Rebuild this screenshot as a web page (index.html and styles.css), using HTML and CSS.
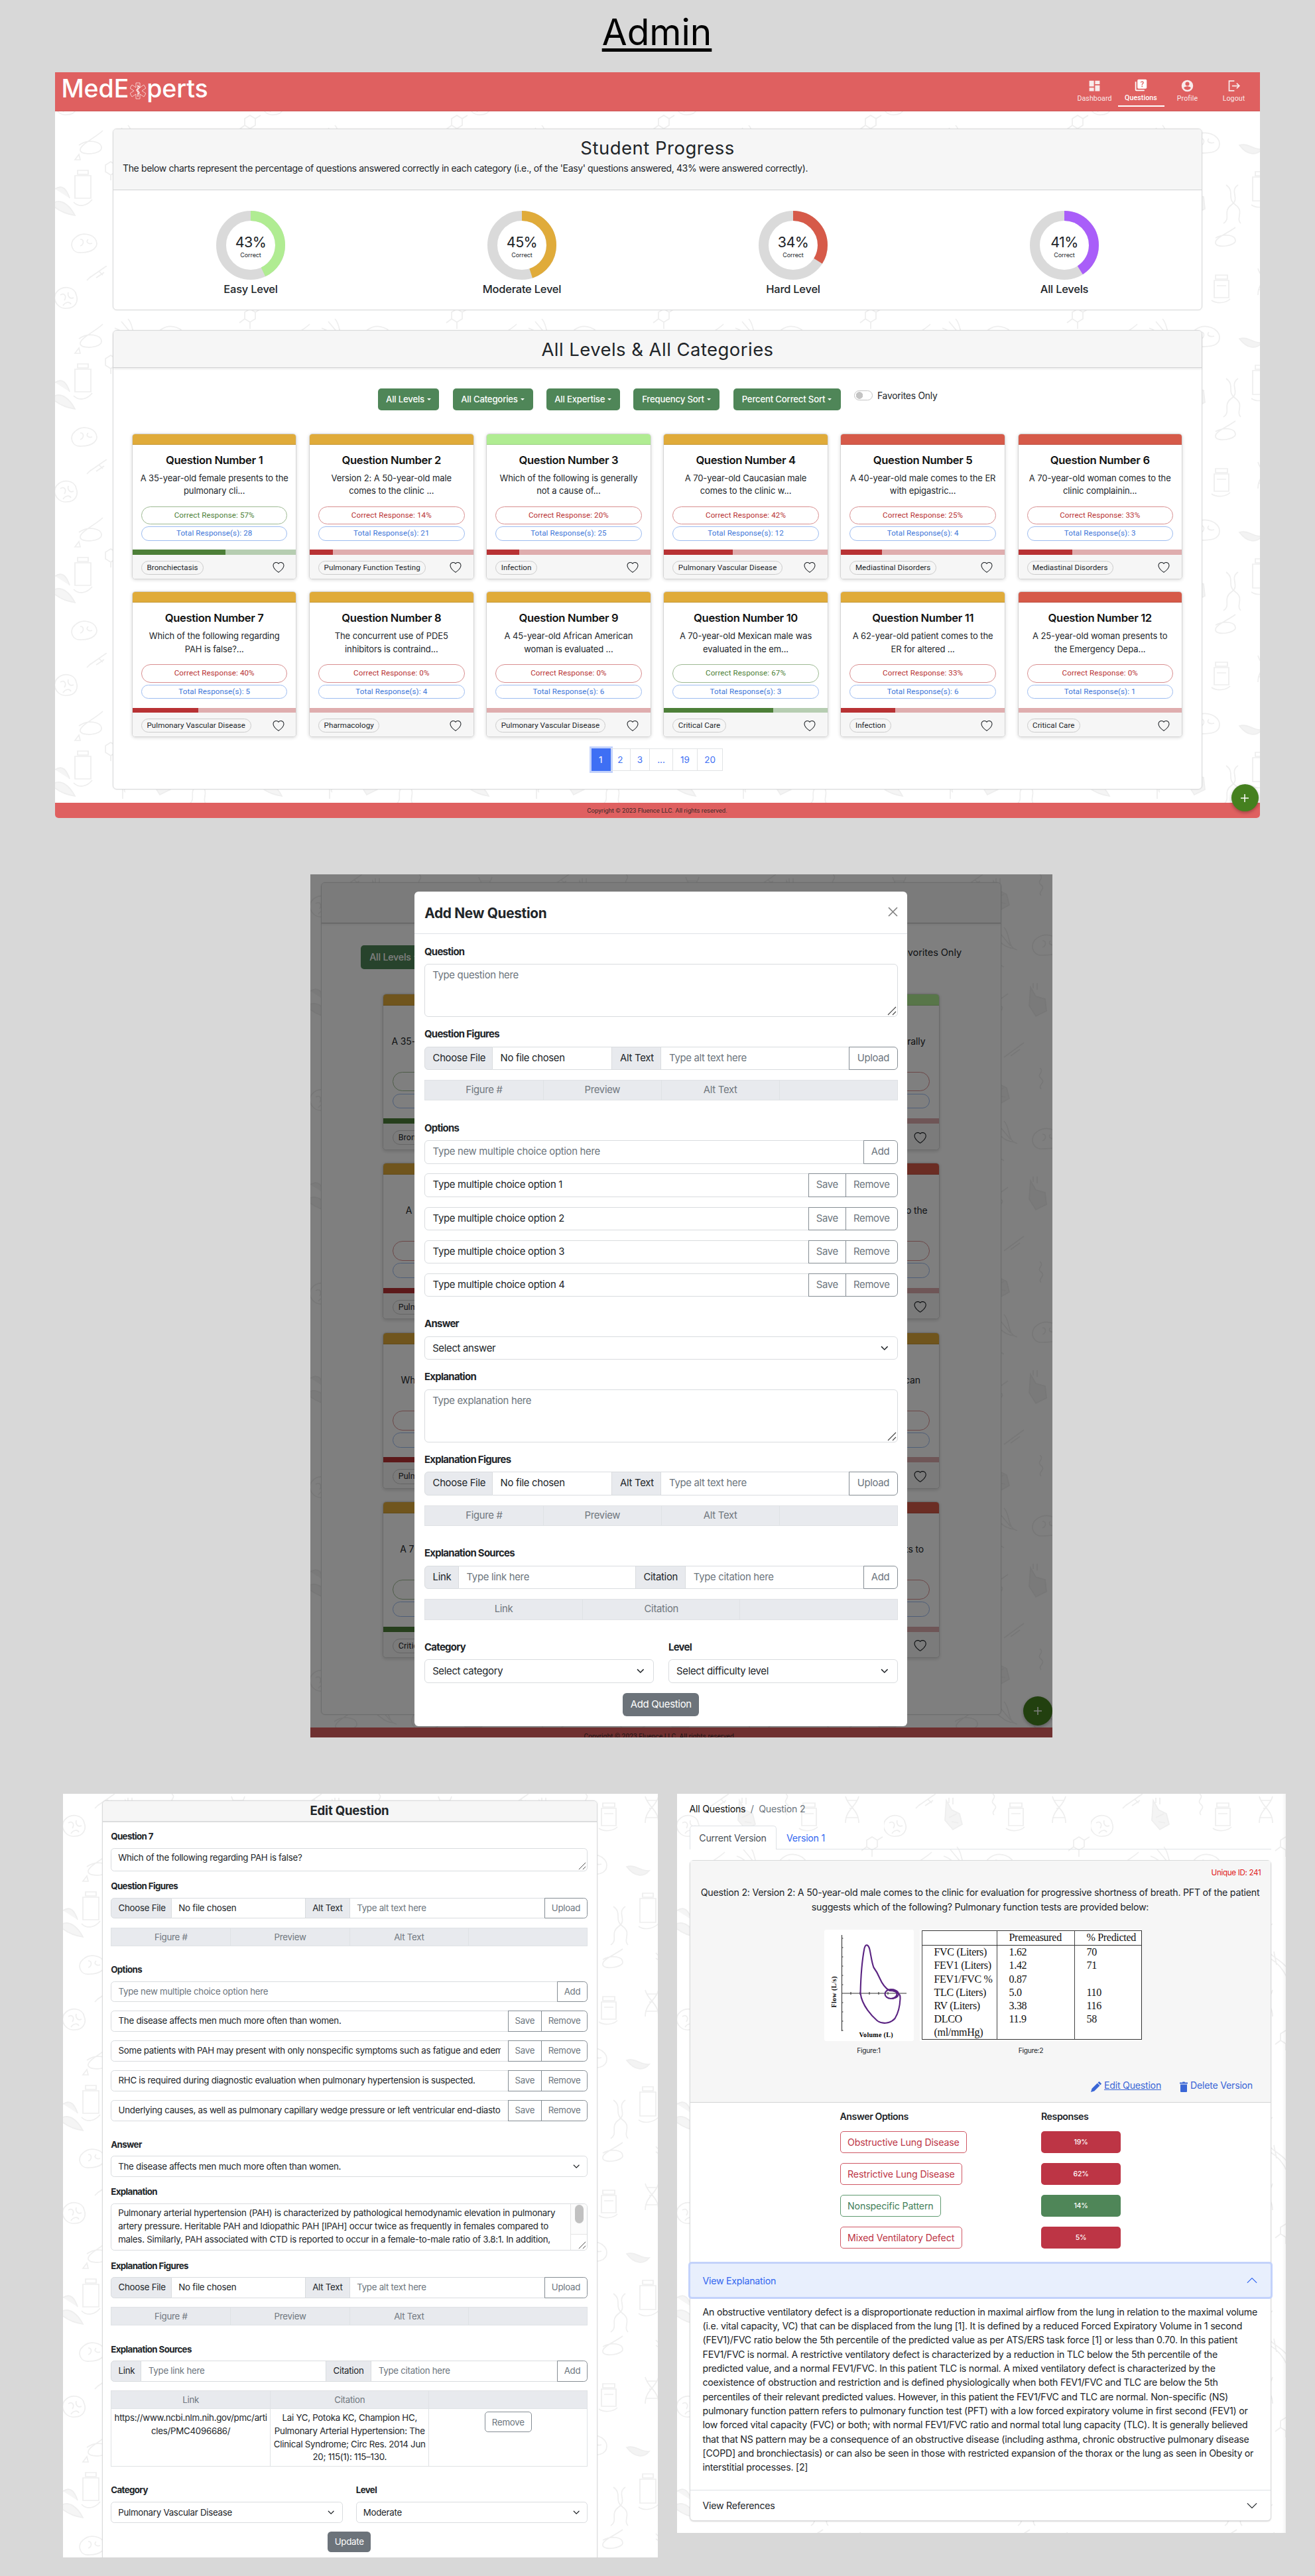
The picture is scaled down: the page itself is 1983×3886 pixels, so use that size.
FILE: index.html
```html
<!DOCTYPE html>
<html lang="en">
<head>
<meta charset="utf-8">
<title>MedExperts Admin</title>
<link rel="stylesheet" href="styles.css">
</head>
<body>
<svg class="sprite" width="0" height="0" aria-hidden="true">
  <symbol id="heart" viewBox="0 0 16 16"><path fill="currentColor" d="m8 2.748-.717-.737C5.6.281 2.514.878 1.4 3.053c-.523 1.023-.641 2.5.314 4.385.92 1.815 2.834 3.989 6.286 6.357 3.452-2.368 5.365-4.542 6.286-6.357.955-1.886.838-3.362.314-4.385C13.486.878 10.4.28 8.717 2.01L8 2.748zM8 15C-7.333 4.868 3.279-3.04 7.824 1.143c.06.055.119.112.176.171a3.12 3.12 0 0 1 .176-.17C12.72-3.042 23.333 4.867 8 15z"/></symbol>
  <symbol id="chev" viewBox="0 0 16 16"><path fill="none" stroke="currentColor" stroke-width="2" stroke-linecap="round" stroke-linejoin="round" d="m2 5 6 6 6-6"/></symbol>
  <symbol id="chevthin" viewBox="0 0 16 16"><path fill="none" stroke="currentColor" stroke-width="1.1" stroke-linecap="round" stroke-linejoin="round" d="m2 5 6 6 6-6"/></symbol>
  <symbol id="grip" viewBox="0 0 14 14"><path stroke="#444" stroke-width="1.1" d="M1 13 13 1M8 13l5-5"/></symbol>
</svg>

<h1 class="page-title">Admin</h1>

<section class="panel dash">
  <header class="nav">
    <div class="logo"><span>MedE</span><svg class="star" viewBox="0 0 24 26"><path fill="none" stroke="#fff" stroke-opacity=".75" stroke-width=".9" d="M9 1h6v7l6-4 3 5-6 4 6 4-3 5-6-4v7H9v-7l-6 4-3-5 6-4-6-4 3-5 6 4z"/><path fill="none" stroke="#fff" stroke-width="1.1" d="M12 4v18M12 6c4 1 3 3 0 4s-3 3 0 4 3 3 0 4"/></svg><span>perts</span></div>
    <nav class="tabs">
      <a class="tab"><svg viewBox="0 0 24 24"><path fill="currentColor" d="M3 13h8V3H3zm0 8h8v-6H3zm10 0h8V11h-8zm0-18v6h8V3z"/></svg>Dashboard</a>
      <a class="tab on"><svg viewBox="0 0 24 24"><path fill="currentColor" d="M4 6H2v14a2 2 0 0 0 2 2h14v-2H4zm16-4H8a2 2 0 0 0-2 2v12a2 2 0 0 0 2 2h12a2 2 0 0 0 2-2V4a2 2 0 0 0-2-2m-5.990 13a1.050 1.050 0 1 1 0-2.100 1.050 1.050 0 0 1 0 2.100m2.500-6.170c-.63.930-1.230 1.210-1.560 1.810-.13.240-.18.400-.18 1.180h-1.520c0-.410-.06-1.080.26-1.650.410-.730 1.180-1.160 1.630-1.800.480-.680.210-1.940-1.140-1.940-.880 0-1.320.670-1.500 1.230l-1.370-.570C11.510 5.960 12.520 5 13.990 5c1.230 0 2.080.560 2.510 1.260.370.600.580 1.730.010 2.570"/></svg>Questions</a>
      <a class="tab"><svg viewBox="0 0 24 24"><path fill="currentColor" d="M12 2a10 10 0 1 0 0 20 10 10 0 0 0 0-20m0 3a3.500 3.500 0 1 1 0 7 3.500 3.500 0 0 1 0-7m0 14.200a7.200 7.200 0 0 1-6-3.220c.030-1.990 4-3.080 6-3.080s5.970 1.090 6 3.080a7.200 7.200 0 0 1-6 3.220"/></svg>Profile</a>
      <a class="tab"><svg viewBox="0 0 24 24"><path fill="none" stroke="currentColor" stroke-width="2" d="M13 3.500H4v17h9M9 12h12M17 7.500l4.500 4.500-4.500 4.500"/></svg>Logout</a>
    </nav>
  </header>

  <div class="card progress-card">
    <div class="card-head">
      <h2>Student Progress</h2>
      <p>The below charts represent the percentage of questions answered correctly in each category (i.e., of the 'Easy' questions answered, 43% were answered correctly).</p>
    </div>
    <div class="donuts">
      <div class="donut"><svg viewBox="0 0 104 104"><circle cx="52" cy="52" r="44.500" class="ring"/><circle cx="52" cy="52" r="44.500" class="arc easy" pathLength="100" stroke-dasharray="43 100"/><text x="52" y="55" class="pct">43%</text><text x="52" y="69.500" class="cap">Correct</text></svg><b>Easy Level</b></div>
      <div class="donut"><svg viewBox="0 0 104 104"><circle cx="52" cy="52" r="44.500" class="ring"/><circle cx="52" cy="52" r="44.500" class="arc mod" pathLength="100" stroke-dasharray="45 100"/><text x="52" y="55" class="pct">45%</text><text x="52" y="69.500" class="cap">Correct</text></svg><b>Moderate Level</b></div>
      <div class="donut"><svg viewBox="0 0 104 104"><circle cx="52" cy="52" r="44.500" class="ring"/><circle cx="52" cy="52" r="44.500" class="arc hard" pathLength="100" stroke-dasharray="34 100"/><text x="52" y="55" class="pct">34%</text><text x="52" y="69.500" class="cap">Correct</text></svg><b>Hard Level</b></div>
      <div class="donut"><svg viewBox="0 0 104 104"><circle cx="52" cy="52" r="44.500" class="ring"/><circle cx="52" cy="52" r="44.500" class="arc all" pathLength="100" stroke-dasharray="41 100"/><text x="52" y="55" class="pct">41%</text><text x="52" y="69.500" class="cap">Correct</text></svg><b>All Levels</b></div>
    </div>
  </div>

  <div class="card list-card">
    <div class="card-head slim"><h2 class="wide">All Levels &amp; All Categories</h2></div>
    <div class="filters">
      <span class="dd w1">All Levels<i></i></span><span class="dd w2">All Categories<i></i></span><span class="dd w3">All Expertise<i></i></span><span class="dd w4">Frequency Sort<i></i></span><span class="dd w5">Percent Correct Sort<i></i></span>
      <span class="fav"><span class="toggle"></span>Favorites Only</span>
    </div>
    <div class="grid">
      <article class="q mod good"><h3>Question Number 1</h3><p>A 35-year-old female presents to the<br>pulmonary cli...</p><div class="pill">Correct Response: 57%</div><div class="pill tot">Total Response(s): 28</div><div class="bar"><i style="width:57%"></i></div><footer><span>Bronchiectasis</span><svg><use href="#heart"/></svg></footer></article>
      <article class="q mod"><h3>Question Number 2</h3><p>Version 2: A 50-year-old male<br>comes to the clinic ...</p><div class="pill">Correct Response: 14%</div><div class="pill tot">Total Response(s): 21</div><div class="bar"><i style="width:14%"></i></div><footer><span>Pulmonary Function Testing</span><svg><use href="#heart"/></svg></footer></article>
      <article class="q easy"><h3>Question Number 3</h3><p>Which of the following is generally<br>not a cause of...</p><div class="pill">Correct Response: 20%</div><div class="pill tot">Total Response(s): 25</div><div class="bar"><i style="width:20%"></i></div><footer><span>Infection</span><svg><use href="#heart"/></svg></footer></article>
      <article class="q mod"><h3>Question Number 4</h3><p>A 70-year-old Caucasian male<br>comes to the clinic w...</p><div class="pill">Correct Response: 42%</div><div class="pill tot">Total Response(s): 12</div><div class="bar"><i style="width:42%"></i></div><footer><span>Pulmonary Vascular Disease</span><svg><use href="#heart"/></svg></footer></article>
      <article class="q hard"><h3>Question Number 5</h3><p>A 40-year-old male comes to the ER<br>with epigastric...</p><div class="pill">Correct Response: 25%</div><div class="pill tot">Total Response(s): 4</div><div class="bar"><i style="width:25%"></i></div><footer><span>Mediastinal Disorders</span><svg><use href="#heart"/></svg></footer></article>
      <article class="q hard"><h3>Question Number 6</h3><p>A 70-year-old woman comes to the<br>clinic complainin...</p><div class="pill">Correct Response: 33%</div><div class="pill tot">Total Response(s): 3</div><div class="bar"><i style="width:33%"></i></div><footer><span>Mediastinal Disorders</span><svg><use href="#heart"/></svg></footer></article>
      <article class="q mod"><h3>Question Number 7</h3><p>Which of the following regarding<br>PAH is false?...</p><div class="pill">Correct Response: 40%</div><div class="pill tot">Total Response(s): 5</div><div class="bar"><i style="width:40%"></i></div><footer><span>Pulmonary Vascular Disease</span><svg><use href="#heart"/></svg></footer></article>
      <article class="q mod"><h3>Question Number 8</h3><p>The concurrent use of PDE5<br>inhibitors is contraind...</p><div class="pill">Correct Response: 0%</div><div class="pill tot">Total Response(s): 4</div><div class="bar"></div><footer><span>Pharmacology</span><svg><use href="#heart"/></svg></footer></article>
      <article class="q mod"><h3>Question Number 9</h3><p>A 45-year-old African American<br>woman is evaluated ...</p><div class="pill">Correct Response: 0%</div><div class="pill tot">Total Response(s): 6</div><div class="bar"></div><footer><span>Pulmonary Vascular Disease</span><svg><use href="#heart"/></svg></footer></article>
      <article class="q mod good"><h3>Question Number 10</h3><p>A 70-year-old Mexican male was<br>evaluated in the em...</p><div class="pill">Correct Response: 67%</div><div class="pill tot">Total Response(s): 3</div><div class="bar"><i style="width:67%"></i></div><footer><span>Critical Care</span><svg><use href="#heart"/></svg></footer></article>
      <article class="q mod"><h3>Question Number 11</h3><p>A 62-year-old patient comes to the<br>ER for altered ...</p><div class="pill">Correct Response: 33%</div><div class="pill tot">Total Response(s): 6</div><div class="bar"><i style="width:33%"></i></div><footer><span>Infection</span><svg><use href="#heart"/></svg></footer></article>
      <article class="q hard"><h3>Question Number 12</h3><p>A 25-year-old woman presents to<br>the Emergency Depa...</p><div class="pill">Correct Response: 0%</div><div class="pill tot">Total Response(s): 1</div><div class="bar"></div><footer><span>Critical Care</span><svg><use href="#heart"/></svg></footer></article>
    </div>
    <div class="pages"><span class="on">1</span><span>2</span><span>3</span><span class="p4">...</span><span class="p5">19</span><span class="p5">20</span></div>
  </div>
  <footer class="foot">Copyright © 2023 Fluence LLC. All rights reserved.</footer>
  <span class="fab"><svg viewBox="0 0 12 12"><path stroke="#fff" stroke-width="1.500" d="M6 0v12M0 6h12"/></svg></span>
</section>

<section class="panel modal-panel">
  <div class="card back-card">
    <div class="card-head slim"></div>
    <div class="back-filters"><span class="dd">All Levels<i></i></span><span class="back-fav">Favorites Only</span></div>
    <div class="back-grid">
      <article class="q mod good"><p>A 35-year-old female presents to the</p><div class="pill"></div><div class="pill tot"></div><div class="bar"><i style="width:57%"></i></div><footer><span>Bronchiectasis</span></footer></article>
      <article class="q easy"><p>Which of the following is generally</p><div class="pill"></div><div class="pill tot"></div><div class="bar"></div><footer><svg><use href="#heart"/></svg></footer></article>
      <article class="q mod"><p>A 70-year-old Caucasian male</p><div class="pill"></div><div class="pill tot"></div><div class="bar"><i style="width:42%"></i></div><footer><span>Pulmonary Vascular Disease</span></footer></article>
      <article class="q hard"><p>A 70-year-old woman comes to the</p><div class="pill"></div><div class="pill tot"></div><div class="bar"></div><footer><svg><use href="#heart"/></svg></footer></article>
      <article class="q mod"><p>Which of the following regarding</p><div class="pill"></div><div class="pill tot"></div><div class="bar"><i style="width:40%"></i></div><footer><span>Pulmonary Vascular Disease</span></footer></article>
      <article class="q mod"><p>A 45-year-old African American</p><div class="pill"></div><div class="pill tot"></div><div class="bar"></div><footer><svg><use href="#heart"/></svg></footer></article>
      <article class="q mod good"><p>A 70-year-old Mexican male was</p><div class="pill"></div><div class="pill tot"></div><div class="bar"><i style="width:67%"></i></div><footer><span>Critical Care</span></footer></article>
      <article class="q hard"><p>A 25-year-old woman presents to</p><div class="pill"></div><div class="pill tot"></div><div class="bar"></div><footer><svg><use href="#heart"/></svg></footer></article>
    </div>
  </div>
  <footer class="foot back-foot">Copyright © 2023 Fluence LLC. All rights reserved.</footer>
  <span class="fab"><svg viewBox="0 0 12 12"><path stroke="#fff" stroke-width="1.500" d="M6 0v12M0 6h12"/></svg></span>
  <div class="shade"></div>

  <div class="modal">
    <div class="modal-head"><h2>Add New Question</h2><svg viewBox="0 0 15 15"><path stroke="#7f7f7f" stroke-width="1.600" d="m1 1 13 13M14 1 1 14"/></svg></div>
    <div class="form">
      <label>Question</label>
      <div class="area ph">Type question here<svg class="grip"><use href="#grip"/></svg></div>
      <label>Question Figures</label>
      <div class="group file"><span class="addon">Choose File</span><span>No file chosen</span><span class="addon">Alt Text</span><span class="ph">Type alt text here</span><span class="btn">Upload</span></div>
      <div class="thead c4"><span>Figure #</span><span>Preview</span><span>Alt Text</span><span></span></div>
      <label class="far">Options</label>
      <div class="group add"><span class="ph">Type new multiple choice option here</span><span class="btn">Add</span></div>
      <div class="group opt"><span>Type multiple choice option 1</span><span class="btn mid">Save</span><span class="btn">Remove</span></div>
      <div class="group opt"><span>Type multiple choice option 2</span><span class="btn mid">Save</span><span class="btn">Remove</span></div>
      <div class="group opt"><span>Type multiple choice option 3</span><span class="btn mid">Save</span><span class="btn">Remove</span></div>
      <div class="group opt"><span>Type multiple choice option 4</span><span class="btn mid">Save</span><span class="btn">Remove</span></div>
      <label class="far">Answer</label>
      <div class="select">Select answer<svg><use href="#chev"/></svg></div>
      <label>Explanation</label>
      <div class="area ph">Type explanation here<svg class="grip"><use href="#grip"/></svg></div>
      <label>Explanation Figures</label>
      <div class="group file"><span class="addon">Choose File</span><span>No file chosen</span><span class="addon">Alt Text</span><span class="ph">Type alt text here</span><span class="btn">Upload</span></div>
      <div class="thead c4"><span>Figure #</span><span>Preview</span><span>Alt Text</span><span></span></div>
      <label class="far">Explanation Sources</label>
      <div class="group src"><span class="addon">Link</span><span class="ph">Type link here</span><span class="addon">Citation</span><span class="ph">Type citation here</span><span class="btn">Add</span></div>
      <div class="thead c3"><span>Link</span><span>Citation</span><span></span></div>
      <div class="two far">
        <div><label>Category</label><div class="select">Select category<svg><use href="#chev"/></svg></div></div>
        <div><label>Level</label><div class="select">Select difficulty level<svg><use href="#chev"/></svg></div></div>
      </div>
      <div class="submit">Add Question</div>
    </div>
  </div>
</section>

<div class="row">
<section class="panel edit-panel">
  <div class="card edit-card">
    <h2>Edit Question</h2>
    <div class="form">
      <label>Question 7</label>
      <div class="area short">Which of the following regarding PAH is false?<svg class="grip"><use href="#grip"/></svg></div>
      <label>Question Figures</label>
      <div class="group file"><span class="addon">Choose File</span><span>No file chosen</span><span class="addon">Alt Text</span><span class="ph">Type alt text here</span><span class="btn">Upload</span></div>
      <div class="thead c4"><span>Figure #</span><span>Preview</span><span>Alt Text</span><span></span></div>
      <label class="far">Options</label>
      <div class="group add"><span class="ph">Type new multiple choice option here</span><span class="btn">Add</span></div>
      <div class="group opt"><span>The disease affects men much more often than women.</span><span class="btn mid">Save</span><span class="btn">Remove</span></div>
      <div class="group opt"><span><em>Some patients with PAH may present with only nonspecific symptoms such as fatigue and edema.</em></span><span class="btn mid">Save</span><span class="btn">Remove</span></div>
      <div class="group opt"><span>RHC is required during diagnostic evaluation when pulmonary hypertension is suspected.</span><span class="btn mid">Save</span><span class="btn">Remove</span></div>
      <div class="group opt"><span><em>Underlying causes, as well as pulmonary capillary wedge pressure or left ventricular end-diastolic</em></span><span class="btn mid">Save</span><span class="btn">Remove</span></div>
      <label class="far">Answer</label>
      <div class="select">The disease affects men much more often than women.<svg><use href="#chev"/></svg></div>
      <label>Explanation</label>
      <div class="area long">Pulmonary arterial hypertension (PAH) is characterized by pathological hemodynamic elevation in pulmonary<br>artery pressure. Heritable PAH and Idiopathic PAH [IPAH] occur twice as frequently in females compared to<br>males. Similarly, PAH associated with CTD is reported to occur in a female-to-male ratio of 3.8:1. In addition,<div class="scroll"><i></i></div><svg class="grip"><use href="#grip"/></svg></div>
      <label>Explanation Figures</label>
      <div class="group file"><span class="addon">Choose File</span><span>No file chosen</span><span class="addon">Alt Text</span><span class="ph">Type alt text here</span><span class="btn">Upload</span></div>
      <div class="thead c4"><span>Figure #</span><span>Preview</span><span>Alt Text</span><span></span></div>
      <label class="far">Explanation Sources</label>
      <div class="group src"><span class="addon">Link</span><span class="ph">Type link here</span><span class="addon">Citation</span><span class="ph">Type citation here</span><span class="btn">Add</span></div>
      <div class="thead c3"><span>Link</span><span>Citation</span><span></span></div>
      <div class="trow"><span>https://www.ncbi.nlm.nih.gov/pmc/arti<br>cles/PMC4096686/</span><span>Lai YC, Potoka KC, Champion HC,<br>Pulmonary Arterial Hypertension: The<br>Clinical Syndrome; Circ Res. 2014 Jun<br>20; 115(1): 115–130.</span><span><a class="obtn">Remove</a></span></div>
      <div class="two far">
        <div><label>Category</label><div class="select">Pulmonary Vascular Disease<svg><use href="#chev"/></svg></div></div>
        <div><label>Level</label><div class="select">Moderate<svg><use href="#chev"/></svg></div></div>
      </div>
      <div class="submit">Update</div>
    </div>
  </div>
</section>

<section class="panel view-panel">
  <div class="crumbs"><b>All Questions</b><span>/</span><span class="cur">Question 2</span></div>
  <div class="vtabs"><span class="cur">Current Version</span><a>Version 1</a></div>
  <div class="card view-card">
    <div class="stem">
      <div class="uid">Unique ID: 241</div>
      <p>Question 2: Version 2: A 50-year-old male comes to the clinic for evaluation for progressive shortness of breath. PFT of the patient<br>suggests which of the following? Pulmonary function tests are provided below:</p>
      <div class="figs">
        <figure>
          <svg class="loop" viewBox="0 0 135 168">
            <path stroke="#333" stroke-width="1.100" fill="none" d="M26.500 8v145M26.500 96H124M26.500 13h2M26.500 27h2M26.500 41h2M26.500 55h2M26.500 69h2M26.500 83h2M26.500 110h2M26.500 124h2M26.500 138h2M26.500 152h2M40 94v4M54 94v4M68 94v4M82 94v4M96 94v4"/>
            <g stroke="#5b2482" stroke-width="2.100" fill="none" stroke-linecap="round" stroke-linejoin="round">
              <path d="M54.500 96C55 72 57 46 60.500 28c2-7 6-6 8 2 2 9 3 19 6 27 3 4 6 9 9 16 3 7 8 15 15 19 6 0 11 2 13 5 3 0 3 3 3 7-.5 12-3 22-8 30-7 8-20 9-27 3S57 115 54.500 96z"/>
              <ellipse cx="100.500" cy="97" rx="9" ry="7"/><path d="M99 91c6-2 13 2 13 6-1 5-5 6-9 7"/>
            </g>
            <text x="18" y="94" transform="rotate(-90 18 94)" textLength="47">Flow (L/s)</text><text x="78" y="161.500" textLength="51">Volume (L)</text>
          </svg>
          <figcaption>Figure:1</figcaption>
        </figure>
        <figure>
          <div class="pft-wrap"><table class="pft"><tr><th></th><th>Premeasured</th><th>% Predicted</th></tr>
          <tr><td>FVC (Liters)<br>FEV1 (Liters)<br>FEV1/FVC %<br>TLC (Liters)<br>RV (Liters)<br>DLCO<br>(ml/mmHg)</td><td>1.62<br>1.42<br>0.87<br>5.0<br>3.38<br>11.9</td><td>70<br>71<br><br>110<br>116<br>58</td></tr></table></div>
          <figcaption>Figure:2</figcaption>
        </figure>
      </div>
      <div class="acts">
        <a class="edit"><svg viewBox="0 0 16 16"><path fill="currentColor" d="M12.854.146a.5.500 0 0 0-.707 0L10.500 1.793 14.207 5.500l1.647-1.646a.5.500 0 0 0 0-.708zM13.500 6.207 9.793 2.500 1.500 10.800 0 16l5.200-1.500z"/></svg><u>Edit Question</u></a>
        <a><svg class="bin" viewBox="0 0 12 16"><path fill="currentColor" d="M0 1.500h4L4.500.5h3l.5 1h4v2H0zM1 4.500h10V15q0 1-1 1H2q-1 0-1-1z"/></svg>Delete Version</a>
      </div>
    </div>
    <div class="answers">
      <b>Answer Options</b><b>Responses</b>
      <span><i class="ans">Obstructive Lung Disease</i></span><i class="res">19%</i>
      <span><i class="ans">Restrictive Lung Disease</i></span><i class="res">62%</i>
      <span><i class="ans ok">Nonspecific Pattern</i></span><i class="res ok">14%</i>
      <span><i class="ans">Mixed Ventilatory Defect</i></span><i class="res">5%</i>
    </div>
    <div class="acc open">View Explanation<svg><use href="#chevthin"/></svg></div>
    <div class="expl">An obstructive ventilatory defect is a disproportionate reduction in maximal airflow from the lung in relation to the maximal volume<br>(i.e. vital capacity, VC) that can be displaced from the lung [1]. It is defined by a reduced Forced Expiratory Volume in 1 second<br>(FEV1)/FVC ratio below the 5th percentile of the predicted value as per ATS/ERS task force [1] or less than 0.70. In this patient<br>FEV1/FVC is normal. A restrictive ventilatory defect is characterized by a reduction in TLC below the 5th percentile of the<br>predicted value, and a normal FEV1/FVC. In this patient TLC is normal. A mixed ventilatory defect is characterized by the<br>coexistence of obstruction and restriction and is defined physiologically when both FEV1/FVC and TLC are below the 5th<br>percentiles of their relevant predicted values. However, in this patient the FEV1/FVC and TLC are normal. Non-specific (NS)<br>pulmonary function pattern refers to pulmonary function test (PFT) with a low forced expiratory volume in first second (FEV1) or<br>low forced vital capacity (FVC) or both; with normal FEV1/FVC ratio and normal total lung capacity (TLC). It is generally believed<br>that that NS pattern may be a consequence of an obstructive disease (including asthma, chronic obstructive pulmonary disease<br>[COPD] and bronchiectasis) or can also be seen in those with restricted expansion of the thorax or the lung as seen in Obesity or<br>interstitial processes. [2]</div>
    <div class="acc">View References<svg><use href="#chevthin"/></svg></div>
  </div>
</section>
</div>
</body>
</html>
```
FILE: styles.css
```css
* { box-sizing: border-box; }
body {
  margin: 0;
  width: 1983px;
  height: 3886px;
  background: #d8d8d8;
  color: #212529;
  font-family: Inter, "Liberation Sans", sans-serif;
  overflow-x: hidden;
}
h1, h2, h3, p, figure { margin: 0; }
i { font-style: normal; }
.sprite { position: absolute; }

.page-title {
  height: 109px;
  padding-top: 14.7px;
  padding-right: 2px;
  text-align: center;
  color: #000;
  font-size: 55px;
  font-weight: 400;
  line-height: 66.6px;
  text-decoration: underline;
  text-decoration-thickness: 4.5px;
  text-underline-offset: 4.5px;
  text-decoration-skip-ink: none;
}

.panel {
  position: relative;
  overflow: hidden;
  background: #fff url("data:image/svg+xml,%3Csvg xmlns='http://www.w3.org/2000/svg' width='312' height='292' fill='none' stroke='%23eeeeee' stroke-width='1.700'%3E%3Cpath d='M2 40c-8 12 4 26 16 24 12 0 18-10 14-20-2-12-20-16-30-4zm6 4c6-4 10 2 6 8m6-12c-2 8 4 10 8 8m-16 12c4-6 10-6 12-2'/%3E%3Cpath d='M52 18l26-18m-16 18l12-8m-8-2l6 6M48 22l6-6'/%3E%3Cpath d='M94 10l8 14 12 6 4 16-14 8-12-14zm4-4v8m6-8v10m-6 20l12-6m-8 12l10 2' fill='%23f4f4f4'/%3E%3Cpath d='M164 0c8 6-6 10 2 16s-6 10 0 16'/%3E%3Cpath d='M190 14h18v6h-18zm-2 8h22v26h-22zm4 8h14m-22 22c8 6 22 4 28-2'/%3E%3Cpath d='M254 4c4 16 20 20 20 40M274 4c-4 16-20 20-20 40m2-34h16m-12 12h6m-12 14h18'/%3E%3Cpath d='M286 70l8-5 8 5v10l-8 5-8-5zm16 0l8-5m-24 15l-8 6m16-1v10'/%3E%3Cpath d='M36 110c14-10 34-6 34 4s-30 12-32 4 24-20 34-30M36 124l-6 8h8z'/%3E%3Cpath d='M34 148h16v6H34zm-4 8h24v34H30zm-2 40c8 8 20 6 28-4'/%3E%3Cpath d='M0 176c12-8 18 2 22 14M0 196c10-4 22 4 30 20-14-2-22-6-30-12' fill='%23f5f5f5'/%3E%3Cpath d='M100 84l20 24m-10-28c10 10 4 30 20 34m-40-20c14 4 20 18 36 18'/%3E%3Cpath d='M160 96c-12 8-8 26 6 26s30 0 30-14-22-22-36-12zm8 4c6 0 6 8 0 10m12-10c-4 4 0 8 8 6'/%3E%3Cpath d='M226 110c14-4 22 8 34 6-8 10-22 10-34-6z' fill='%23f3f3f3'/%3E%3Cpath d='M88 180l14 10 14-10m-14 0v40m-4-34c10 4-4 8 6 12s-4 8 2 12'/%3E%3Cpath d='M76 140l8-5 8 5v10l-8 5-8-5zm16 0l10-5 8 5m-26 15v8'/%3E%3Cpath d='M150 170l8 14 14 4 2 18-16 8-10-16zm4-6v8m6-8v10' fill='%23f4f4f4'/%3E%3Cpath d='M206 170c14 10 0 20 14 30s0 20 8 28m-4-58c-14 10 4 20-10 30s0 20-12 28'/%3E%3Cpath d='M250 150h16v6h-16zm-4 8h24v36h-24zm-2 42c8 6 22 4 30-4'/%3E%3Cpath d='M30 250c-10 8-4 24 10 22 16 0 26-8 22-18s-22-14-32-4zm8 2c6 0 6 8 0 10m12-10c-4 4 0 8 6 6'/%3E%3Cpath d='M110 276l30-22m-20 20l14-10M190 250c14-8 30-4 30 4s-28 12-30 4 20-16 30-24'/%3E%3Cpath d='M270 240c8 10 20 12 30 28m-30-20c10 6 20 16 26 30m-20-40l4 20'/%3E%3C/svg%3E");
}
.card {
  background: #fff;
  border: 1px solid #d9dadb;
  border-radius: 6px;
  box-shadow: 0 0 3px rgba(0,0,0,.08);
}
.card-head {
  height: 91.5px;
  background: #f6f6f6;
  border-bottom: 1px solid #d2d3d4;
  border-radius: 5px 5px 0 0;
}
.card-head h2 {
  padding-top: 11px;
  text-align: center;
  font-size: 27.5px;
  font-weight: 400;
  line-height: 34px;
  letter-spacing: .5px;
}
.card-head p { margin: 2.500px 0 0 14px; font-size: 14px; line-height: 22px; letter-spacing: -.36px; white-space: nowrap; }
.card-head.slim { height: 56px; box-shadow: 0 2px 3px rgba(0,0,0,.08); }

/* Dashboard */
.dash { width: 1817px; height: 1125px; margin-left: 82.5px; border-radius: 0 0 5px 5px; }
.nav { display: flex; justify-content: space-between; height: 59px; padding: 0 4px 0 10px; background: #df6060; color: #fff; border-bottom: 1px solid #cc5a5a; }
.logo { display: flex; height: 48px; font-size: 37.500px; font-weight: 500; line-height: 50px; letter-spacing: -.1px; }
.star { width: 24px; height: 26px; margin: 15px 1px 0 2px; }
.tabs { display: flex; }
.tab { display: flex; flex-direction: column; align-items: center; width: 70px; height: 52px; padding-top: 10px; font: 10.600px/14px Roboto, sans-serif; letter-spacing: .1px; color: #f8ebeb; }
.tab svg { width: 21px; height: 21px; margin-bottom: 2px; }
.tab.on { padding-top: 8.500px; font-weight: 500; color: #fff; border-bottom: 2px solid #fff; }

.progress-card { width: 1643px; height: 273.500px; margin: 26px 0 0 87.500px; }
.donuts { display: grid; grid-template-columns: repeat(4, 409px); margin-left: 2.500px; padding-top: 31px; }
.donut { display: flex; flex-direction: column; align-items: center; }
.donut svg { width: 104px; height: 104px; overflow: visible; }
.donut b { margin-top: 4px; font-size: 16.500px; font-weight: 500; line-height: 20px; letter-spacing: -.25px; }
.ring, .arc { fill: none; stroke: #dadada; stroke-width: 15; }
.arc { transform: rotate(-90deg); transform-origin: 52px 52px; }
.arc.easy { stroke: #b0ec92; }
.arc.mod { stroke: #e0ab3a; }
.arc.hard { stroke: #d65a49; }
.arc.all { stroke: #a95ef9; }
.pct { font-size: 21.500px; text-anchor: middle; letter-spacing: -.6px; fill: #212529; }
.cap { font-size: 9px; text-anchor: middle; fill: #212529; letter-spacing: -.1px; }

.list-card { width: 1643px; height: 693px; margin: 30px 0 0 87.500px; }
h2.wide { padding-top: 11.500px !important; letter-spacing: .45px !important; }
.filters { display: flex; align-items: flex-start; height: 68px; margin: 31px 0 0 399px; }
.dd { display: flex; align-items: center; justify-content: center; gap: 4px; height: 33.500px; margin-right: 20.500px; border-radius: 5px; background: #4f8658; color: #fff; font-size: 13.200px; font-weight: 500; letter-spacing: -.2px; white-space: nowrap; }
.dd i { border: 3px solid transparent; border-top-color: #fff; border-bottom: 0; }
.w1 { width: 92px; } .w2 { width: 121px; } .w3 { width: 110.500px; } .w4 { width: 130px; } .w5 { width: 162px; }
.fav { display: flex; align-items: center; gap: 7px; height: 22px; font-size: 13.800px; letter-spacing: -.2px; }
.toggle { width: 28px; height: 15px; border: 1px solid #c4c4c4; border-radius: 8px; background: radial-gradient(circle at 7px 6.500px, #c4c4c4 5px, #fff 5.500px); }
.grid { display: grid; grid-template-columns: repeat(6, 248.400px); gap: 18.300px 18.730px; margin-left: 28px; }

.q { --tone: #b83234; --track: #dfadae; height: 220px; border: 1px solid #d5d5d5; border-radius: 5px; background: #fff; box-shadow: 0 1px 5px rgba(0,0,0,.15); text-align: center; overflow: hidden; }
.q::before { content: ""; display: block; height: 15px; border-bottom: 1px solid rgba(0,0,0,.12); background: #e0ab3a; }
.q.easy::before { background: #b0ec92; }
.q.hard::before { background: #d65a49; }
.q.good { --tone: #4d7f38; --track: #b6cdb1; }
.q h3 { margin-top: 13.500px; color: #111; font-size: 16.600px; font-weight: 600; line-height: 20px; letter-spacing: -.35px; }
.q p { margin-top: 7.600px; font-size: 13px; line-height: 19.800px; letter-spacing: -.1px; white-space: nowrap; }
.pill { height: 27.700px; margin: 12.500px 13px 0; border: 1px solid color-mix(in srgb, var(--tone) 55%, #fff); border-radius: 14px; color: var(--tone); font: 11.600px/25.500px Roboto, sans-serif; letter-spacing: .1px; }
.pill.tot { height: 21.300px; margin-top: 3px; border-color: #9dbcf0; border-radius: 11px; color: #3d76d8; line-height: 19.500px; }
.bar { height: 7.500px; margin-top: 13.800px; background: var(--track); }
.bar i { display: block; height: 100%; background: var(--tone); }
.q footer { display: flex; justify-content: space-between; align-items: flex-start; height: 38px; padding: 9px 17.500px 0 13px; background: #f6f6f6; }
.q footer span { height: 21px; padding: 0 7.500px; border: 1px solid #cbcbcb; border-radius: 11px; font: 11.600px/19.500px Roboto, sans-serif; letter-spacing: .05px; white-space: nowrap; }
.q footer svg { width: 18px; height: 17px; margin: 2.500px 0 0 auto; }

.pages { display: flex; margin: 17.500px 0 0 720.500px; }
.pages span { width: 29.600px; height: 33.500px; border: 1px solid #e1e3e5; border-left: 0; color: #3e6ff4; text-align: center; font-size: 13.500px; line-height: 32px; }
.pages .on { background: #3e6ff4; border-color: #3e6ff4; color: #fff; box-shadow: 0 0 0 3px #c3d2fb; }
.pages .p4 { width: 34.500px; } .pages .p5 { width: 37.500px; }
.foot { position: absolute; left: 0; right: 0; bottom: 0; height: 23px; background: #df6060; color: #3a2a2a; text-align: center; font: 9.500px/24px Roboto, sans-serif; letter-spacing: 0; }
.fab { position: absolute; right: 2px; bottom: 10px; display: grid; place-items: center; width: 41px; height: 41px; border-radius: 50%; background: #45801f; box-shadow: 0 2px 5px rgba(0,0,0,.3); }
.fab svg { width: 12px; height: 12px; }

/* Modal */
.modal-panel { width: 1119px; height: 1302px; margin: 85px 0 0 468px; }
.back-card { width: 1025.500px; height: 1256px; margin: 12px 0 0 16px; }
.back-card .card-head { height: 61px; border-color: #bbb; }
.back-filters { display: flex; justify-content: space-between; align-items: flex-start; height: 72.500px; margin: 33px 58.500px 0 59px; font-size: 14.600px; }
.back-filters .dd { width: 99px; height: 35.500px; font-size: 14.200px; margin: 0; }
.back-fav { line-height: 23px; letter-spacing: -.1px; }
.back-grid { display: grid; grid-template-columns: 248.400px 248.400px; justify-content: space-between; row-gap: 18.100px; width: 783px; margin-left: 85.500px; zoom: 1.0735; }
.back-grid .q p { margin-top: 40.100px; height: 40.600px; }
.shade { position: absolute; inset: 0; background: rgba(0,0,0,.5); }
.modal-panel .foot { height: 15.500px; line-height: 27px; font-size: 10.300px; padding-right: 65px; overflow: hidden; }
.modal-panel .fab { width: 44px; height: 44px; right: 0; bottom: 18px; }
.modal { position: absolute; left: 157.300px; top: 26px; width: 743px; height: 1258.500px; border-radius: 6px; background: #fff; }
.modal-head { display: flex; justify-content: space-between; align-items: center; height: 63.500px; padding: 2px 14px 0 15px; border-bottom: 1px solid #dee2e6; }
.modal-head h2 { font-size: 20.800px; font-weight: 700; letter-spacing: -.3px; }
.modal-head svg { width: 15px; height: 15px; margin-top: -3px; }
.modal .form { --file: 103px 180.500px 74px 1fr 72.500px; --src: 51.900px 267px 75.400px 1fr 51.100px; --add: 51.100px; --save: 56.200px; --rem: 77.700px; padding: 16px 14.700px 0; font-size: 14.870px; }
.form { letter-spacing: -.02em; }
.form label { display: block; margin: 0 0 .5em; height: 1.5em; font-weight: 700; line-height: 1.5em; letter-spacing: -.045em; white-space: nowrap; }
.form .far { margin-top: 1.970em; }
.modal .form .far { margin-top: 2.020em; }
.ph, .btn, .obtn { color: #6c757d; }
.area { position: relative; height: 5.375em; margin-bottom: 1em; padding: .34em .75em; border: 1px solid #d9dcdf; border-radius: .4em; line-height: 1.5; white-space: nowrap; overflow: hidden; }
.grip { position: absolute; right: 1px; bottom: 1px; width: 14px; height: 14px; }
.group { display: grid; height: 2.375em; margin-bottom: 1em; }
.group > span { display: block; padding: 0 .78em; border: 1px solid #d9dcdf; border-left-width: 0; line-height: 2.25em; white-space: nowrap; overflow: hidden; }
.group > span:first-child { border-left-width: 1px; border-radius: .4em 0 0 .4em; }
.group em { display: block; overflow: hidden; font-style: normal; }
.group > .addon { background: #e8eaee; }
.group > .btn { padding: 0; margin-left: -1px; border: 1px solid #858d94; border-radius: 0 .4em .4em 0; text-align: center; }
.group > .btn.mid { border-radius: 0; }
.file { grid-template-columns: var(--file); }
.src { grid-template-columns: var(--src); }
.add { grid-template-columns: 1fr var(--add); }
.opt { grid-template-columns: 1fr var(--save) var(--rem); }
.thead, .trow { display: grid; text-align: center; }
.thead { height: 2.125em; background: #e8eaee; border: 1px solid #dfe2e5; color: #70777e; line-height: 2em; }
.c4 { grid-template-columns: repeat(4, 1fr); }
.c3, .trow { grid-template-columns: repeat(3, 1fr); }
.thead span + span, .trow span + span { border-left: 1px solid #dfe2e5; }
.select { position: relative; display: flex; justify-content: space-between; align-items: center; height: 2.375em; margin-bottom: 1em; padding: 0 .85em 0 .75em; border: 1px solid #d9dcdf; border-radius: .4em; white-space: nowrap; }
.select svg { width: .78em; height: .78em; }
.two { display: grid; grid-template-columns: 1fr 1fr; gap: 1.5em; }
.submit { width: fit-content; height: 2.375em; margin: 0 auto; padding: 0 .78em; border-radius: .4em; background: #6c737a; color: #fff; line-height: 2.375em; }

/* Edit and view */
.row { display: flex; align-items: flex-start; margin: 85px 0 0 95px; }
.edit-panel { width: 896.500px; height: 1151.500px; }
.edit-card { width: 747px; height: 1160px; margin: 10px 0 0 58.500px; }
.edit-card h2 { height: 31.500px; border-bottom: 2px solid #dcddde; border-radius: 5px 5px 0 0; background: #f6f6f6; text-align: center; font-size: 18.600px; font-weight: 700; line-height: 29px; letter-spacing: -.2px; }
.edit-card .form { --file: 91.800px 201.800px 67px 1fr 64.600px; --src: 46.300px 278.700px 68.200px 1fr 45.600px; --add: 45.600px; --save: 50.200px; --rem: 69.400px; padding: 12.500px 13.200px 0 12.700px; font-size: 13.300px; }
.area.short { height: 2.650em; }
.area.long { padding-top: .34em; letter-spacing: -.017em; }
.edit-card .grip { width: 12px; height: 12px; }
.scroll { position: absolute; right: 0; top: 0; bottom: 0; width: 25px; border-left: 1px solid #e4e4e4; background: linear-gradient(#fcfcfc 45px, #e4e4e4 45px, #e4e4e4 46px, #fff 46px); }
.scroll i { position: absolute; left: 6px; top: 1px; width: 13px; height: 28px; border-radius: 7px; background: #c1c1c1; }
.trow { border: 1px solid #dfe2e5; border-top: 0; }
.trow span { height: 86px; padding-top: 3.500px; line-height: 19.900px; white-space: nowrap; }
.obtn { display: inline-block; height: 31.600px; padding: 0 10px; border: 1px solid #858d94; border-radius: 5px; line-height: 30px; }

.view-panel { width: 917.500px; height: 1115px; margin-left: 29.500px; padding: 0 21.500px 0 18.500px; font-size: 14.200px; letter-spacing: -.25px; box-shadow: inset -6px 0 6px -5px rgba(0,0,0,.08); }
.crumbs { display: flex; gap: 7.500px; padding-top: 12px; line-height: 21.300px; }
.crumbs b { font-weight: 400; color: #111; }
.crumbs .cur, .crumbs span { color: #6c757d; }
.vtabs { display: flex; height: 36px; margin-top: 15px; border-bottom: 1px solid #dee2e6; line-height: 35px; }
.vtabs .cur { width: 131px; height: 36px; border: 1px solid #dee2e6; border-bottom: 0; border-radius: 5px 5px 0 0; background: #fff; text-align: center; color: #495057; }
.vtabs a { margin-left: 15.500px; padding-top: 1px; color: #3367f0; }
.view-card { width: 877px; height: 997.500px; margin-top: 15.500px; box-shadow: 0 1px 2px rgba(0,0,0,.15); }
.stem { height: 365.500px; border-bottom: 1px solid #d2d3d4; background: #f6f6f6; }
.uid { padding: 9px 14px 0 0; text-align: right; color: #e02020; font-size: 11.700px; line-height: 18px; letter-spacing: -.35px; }
.stem p { margin-top: 10.500px; text-align: center; line-height: 21.300px; white-space: nowrap; }
.figs { display: flex; gap: 9.500px; margin: 24px 0 0 202px; }
.loop { display: block; width: 135px; height: 168px; border-radius: 3px; background: #fff; font: bold 10px "Liberation Serif", serif; }
.loop text { text-anchor: middle; letter-spacing: 0; }
figcaption { margin-top: 6px; text-align: center; font-size: 10.300px; line-height: 16px; letter-spacing: -.3px; }
.pft-wrap { width: 335px; height: 168px; padding: 1px 0 0 3px; background: #fff; }
.pft { width: 332px; height: 165px; border-collapse: collapse; border: 1px solid #333; table-layout: fixed; color: #111; font: 16px/20.100px "Liberation Serif", serif; letter-spacing: -.3px; }
.pft th, .pft td { padding: 0 0 0 17.500px; border-left: 1px solid #444; text-align: left; vertical-align: top; font-weight: 400; white-space: nowrap; }
.pft th { height: 22.500px; border-bottom: 1px solid #333; }
.pft th:first-child { width: 113px; }
.pft th:nth-child(2) { width: 117px; }
.acts { display: flex; justify-content: flex-end; gap: 28px; margin: 34.500px 26.500px 0 0; color: #3a66d6; line-height: 22px; }
.acts a { display: flex; align-items: center; gap: 4px; }
.acts svg { width: 16px; height: 16px; margin-top: 3px; }
.acts svg.bin { width: 12px; }
.answers { display: grid; grid-template-columns: 303.500px 120px; row-gap: 14.300px; padding: 13px 0 0 226px; height: 241px; align-content: start; }
.answers b { font-weight: 600; line-height: 15px; letter-spacing: -.45px; }
.ans { display: inline-block; height: 33.700px; padding: 0 10.500px; border: 1px solid #cf5764; border-radius: 5px; color: #bd3545; line-height: 32px; white-space: nowrap; letter-spacing: -.15px; }
.ans.ok { border-color: #5f9a70; color: #44805a; }
.res { height: 33.700px; border-radius: 5px; background: #bd3545; color: #fff; text-align: center; font-size: 10.600px; font-weight: 500; line-height: 33px; }
.res.ok { background: #4f8658; }
.acc { display: flex; justify-content: space-between; align-items: center; height: 47px; padding: 0 19px; border-top: 1px solid #dee2e6; }
.acc svg { width: 18px; height: 18px; }
.acc.open { height: 50px; margin-top: 2px; border: 0; background: #e8effd; color: #3367f0; box-shadow: 0 0 0 3px #c3d2fb; border-radius: 2px; }
.acc.open svg { transform: rotate(180deg); }
.expl { height: 290.500px; padding: 11.500px 0 0 19px; line-height: 21.330px; white-space: nowrap; }
```
